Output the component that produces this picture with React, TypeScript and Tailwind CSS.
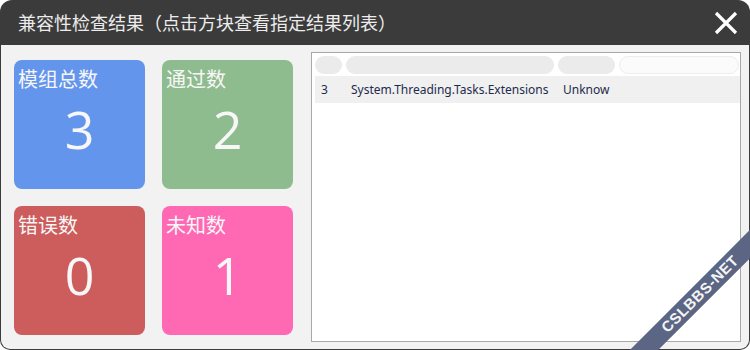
import React from "react";

const cards = [
  { label: "模组总数", value: "3", bg: "bg-[#6495ed]" },
  { label: "通过数", value: "2", bg: "bg-[#8fbc8f]" },
  { label: "错误数", value: "0", bg: "bg-[#cd5c5c]" },
  { label: "未知数", value: "1", bg: "bg-[#ff69b4]" },
];

export default function App() {
  return (
    <div className="w-[750px] h-[350px] bg-white relative overflow-hidden">
      <div className="w-[750px] h-[350px] rounded-t-[12px] rounded-b-[10px] bg-[#3b3b3b] overflow-hidden flex flex-col">
        <div className="h-[45px] shrink-0 flex items-center justify-between pl-[18px] pr-[12px]">
          <span
            className="text-[18px] leading-none text-[#ececec] pb-[1px]"
            style={{ fontFamily: '"Noto Sans CJK SC", sans-serif' }}
          >
            兼容性检查结果（点击方块查看指定结果列表）
          </span>
          <svg width="24" height="24" viewBox="0 0 24 24">
            <path d="M2 2 L22 22 M22 2 L2 22" stroke="#ffffff" strokeWidth="3.2" strokeLinecap="butt" />
          </svg>
        </div>
        <div className="flex-1 bg-[#f2f2f2] mx-[1px] mb-[1px] rounded-b-[9px] flex">
          <div className="grid grid-cols-[131px_131px] grid-rows-[129px_129px] gap-x-[17px] gap-y-[17px] pl-[13px] pt-[15px]">
            {cards.map((c) => (
              <div
                key={c.label}
                className={`${c.bg} rounded-[8px] flex flex-col text-[#f7f7f7]`}
                style={{ fontFamily: '"Noto Sans CJK SC", sans-serif' }}
              >
                <div className="text-[20px] leading-[24px] pl-[4px] pt-[7px]">{c.label}</div>
                <div
                  className="text-[52px] leading-none text-center mt-[12px]"
                  style={{ fontFamily: '"Open Sans", sans-serif' }}
                >
                  {c.value}
                </div>
              </div>
            ))}
          </div>
          <div className="ml-[18px] mt-[7px] w-[430px] h-[290px] border border-[#a8a8a8] bg-white pt-[3px] pl-[3px]">
            <div className="flex gap-[4px] h-[18px]">
              <div className="w-[27px] rounded-[9px] bg-[#ebebeb]" />
              <div className="w-[208px] rounded-[9px] bg-[#ebebeb]" />
              <div className="w-[57px] rounded-[9px] bg-[#ebebeb]" />
              <div className="w-[120px] rounded-[9px] bg-[#fbfbfb] border border-[#ededed]" />
            </div>
            <div
              className="mt-[2px] w-[425px] h-[27px] bg-[#f0f0f0] flex items-center text-[12px] text-[#1e2b4c]"
              style={{ fontFamily: '"Noto Sans", sans-serif' }}
            >
              <span className="w-[36px] pl-[6px]">3</span>
              <span className="w-[212px]">System.Threading.Tasks.Extensions</span>
              <span>Unknow</span>
            </div>
          </div>
        </div>
      </div>
      <div
        className="absolute left-[570px] top-[284px] w-[260px] h-[20px] bg-[#5b6584] flex items-center justify-center text-[#f4f4f4] text-[15px] font-bold tracking-[0.5px]"
        style={{ transform: "rotate(-45deg)", fontFamily: '"Liberation Sans", sans-serif' }}
      >
        CSLBBS-NET
      </div>
    </div>
  );
}
